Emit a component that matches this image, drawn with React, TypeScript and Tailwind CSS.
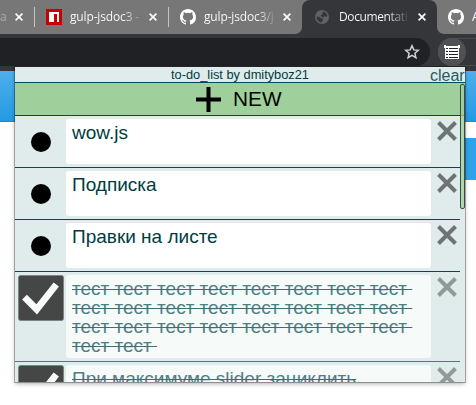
import React from 'react';

type Item = { text: string; done?: boolean; height: string };

const word = 'тест ';
const items: Item[] = [
  { text: 'wow.js', height: 'h-[52px]' },
  { text: 'Подписка', height: 'h-[52px]' },
  { text: 'Правки на листе', height: 'h-[52px]' },
  { text: [word.repeat(8), word.repeat(8), word.repeat(8), word.repeat(2)].join('\n'), done: true, height: 'h-[90px]' },
  { text: 'При максимуме slider зациклить', done: true, height: 'h-[90px]' },
];

function TabClose({ className = '' }: { className?: string }) {
  return (
    <svg className={`shrink-0 ${className}`} width="8" height="8" viewBox="0 0 8 8" stroke="#fff" strokeWidth="1.7">
      <path d="M.6.6l6.8 6.8M7.4.6L.6 7.4" />
    </svg>
  );
}

function GitHub() {
  return (
    <svg className="shrink-0" width="16" height="16" viewBox="0 0 16 16" fill="#fff">
      <path d="M8 0C3.58 0 0 3.58 0 8c0 3.54 2.29 6.53 5.47 7.59.4.07.55-.17.55-.38 0-.19-.01-.82-.01-1.49-2.01.37-2.53-.49-2.69-.94-.09-.23-.48-.94-.82-1.13-.28-.15-.68-.52-.01-.53.63-.01 1.08.58 1.23.82.72 1.21 1.87.87 2.33.66.07-.52.28-.87.51-1.07-1.78-.2-3.64-.89-3.64-3.95 0-.87.31-1.59.82-2.15-.08-.2-.36-1.02.08-2.12 0 0 .67-.21 2.2.82a7.6 7.6 0 0 1 4 0c1.53-1.04 2.2-.82 2.2-.82.44 1.1.16 1.92.08 2.12.51.56.82 1.27.82 2.15 0 3.07-1.87 3.75-3.65 3.95.29.25.54.73.54 1.48 0 1.07-.01 1.93-.01 2.2 0 .21.15.46.55.38A8.01 8.01 0 0 0 16 8c0-4.42-3.58-8-8-8z" />
    </svg>
  );
}

function Tabs() {
  const label = 'whitespace-pre bg-clip-text text-transparent leading-[20px]';
  return (
    <div className="flex h-[34px] bg-[#35363a] font-['Open_Sans','Noto_Sans',sans-serif] text-[12px] tracking-[-0.15px]">
      <div className="flex h-[34px] w-[302px] shrink-0 rounded-br-[7px] bg-[#777]">
        <div className="flex h-[34px] w-[34px] shrink-0 items-center">
          <span className="w-[15px] text-[#aaa]">a</span>
          <TabClose />
        </div>
        <div className="mt-[7px] h-5 w-px shrink-0 bg-[#c4c4c4]" />
        <div className="flex h-[34px] w-[133px] shrink-0 items-center pl-[11px]">
          <svg className="shrink-0" width="16" height="16" viewBox="0 0 16 16">
            <path fill="#c80000" d="M0 0h16v16H0z" />
            <path fill="#fff" d="M3 3h10v10h-2V5H8v8H3z" />
          </svg>
          <span className={`ml-2 w-[71px] bg-gradient-to-r from-white from-75% to-[#888] ${label}`}>gulp-jsdoc3 -</span>
          <TabClose className="ml-[8px]" />
        </div>
        <div className="mt-[7px] h-5 w-px shrink-0 bg-[#c4c4c4]" />
        <div className="flex h-[34px] w-[133px] shrink-0 items-center pl-[11px]">
          <GitHub />
          <span className={`ml-2 w-[71px] bg-gradient-to-r from-white from-75% to-[#888] ${label}`}>gulp-jsdoc3/j</span>
          <TabClose className="ml-[8px]" />
        </div>
      </div>
      <div className="h-[34px] w-[135px] shrink-0 bg-linear-to-b from-[#777] from-50% to-[#35363a] to-50%">
        <div className="flex h-[34px] items-center rounded-t-[8px] bg-[#35363a] pl-[13px]">
          <svg className="shrink-0" width="14" height="14" viewBox="0 0 14 14">
            <circle cx="7" cy="7" r="7" fill="#5f6368" />
            <path fill="#35363a" d="M8.2 1.6c2.2.4 3.8 2 4.2 4.2L11 7.2 9.6 6 8.4 7.4 6.2 6.6 5.6 5.2l1.6-1zM1.5 6.4l2.6.3 1.8 1.4 2.3.6-.4 1.7-1.5 2C3.6 12 1.5 9.600 1.500 6.400z" />
          </svg>
          <span className={`ml-[10px] w-[69px] bg-gradient-to-r from-white from-70% to-[#45464a] tracking-[-0.38px] ${label}`}>Documentati</span>
          <TabClose className="ml-[10px]" />
        </div>
      </div>
      <div className="flex h-[34px] w-[39px] shrink-0 items-center gap-2 rounded-bl-[7px] bg-[#777] pl-[11px]">
        <GitHub />
        <span className="w-1 text-white">A</span>
      </div>
    </div>
  );
}

function Toolbar() {
  return (
    <div className="flex h-[37px] bg-[#35363a] pt-1">
      <div className="flex h-7 w-[430px] items-center justify-end rounded-r-full bg-[#202124] pr-[10px]">
        <svg width="16" height="16" viewBox="0 0 16 16" fill="none" stroke="#d2d3d5" strokeWidth="1.5">
          <path d="M8 1.8l1.8 4.1 4.5.4-3.4 3 1 4.4L8 11.4l-3.900 2.300 1-4.400-3.400-3 4.500-.4z" />
        </svg>
      </div>
      <div className="ml-2 flex h-7 flex-1 items-center rounded-l-full border-y border-l border-[#4a4b4e]">
        <div className="-ml-px flex size-7 shrink-0 items-center justify-center rounded-full bg-[#505154]">
          <svg width="16" height="16" viewBox="0 0 16 16">
            <path fill="#fff" d="M0 1h2v1h12V1h2v3h-1v11H1V4H0z" />
            <path stroke="#222" strokeWidth="1" d="M5 4.500h9M5 7.500h9M5 10.500h9M5 13.500h9M2 4.500h2M2 7.500h2M2 10.500h2M2 13.500h2" />
          </svg>
        </div>
      </div>
    </div>
  );
}

function Row({ text, done, height }: Item) {
  return (
    <div className={`flex shrink-0 border-b pt-[3px] pb-[3px] ${height} ${done ? 'border-[#3f7f84]' : 'border-[#004b50]'}`}>
      <div className="w-[51px] shrink-0 pl-[3px]">
        {done ? (
          <svg width="46" height="46" viewBox="0 0 46 46">
            <rect x=".5" y=".5" width="45" height="45" rx="2" fill="#444746" stroke="#7d8582" />
            <path d="M6.500 22.200L18.700 34.400 38.300 9.500" fill="none" stroke="#f7fbfa" strokeWidth="6.800" />
          </svg>
        ) : (
          <div className="mt-[13px] ml-[13px] size-5 rounded-full bg-black" />
        )}
      </div>
      <div className={`w-[365px] shrink-0 whitespace-pre rounded-[3px] pt-[4px] pl-[6px] text-[19px] leading-[19px] ${done ? 'bg-[#f6faf9] text-[#4d8084] line-through decoration-[#3f6f75] decoration-1' : 'bg-white text-[#003c41]'}`}>
        {text}
      </div>
      <svg className="mt-[2px] ml-[6px]" width="20" height="20" viewBox="0 0 20 20" stroke={done ? '#929a98' : '#6e7473'} strokeWidth="4">
        <path d="M1.500 1.500l17 17M18.500 1.500l-17 17" />
      </svg>
    </div>
  );
}

export default function App() {
  return (
    <div className="relative h-[405px] w-[476px] overflow-hidden bg-white font-['Liberation_Sans',Arial,sans-serif]">
      <Tabs />
      <Toolbar />
      <div className="h-[51px] border-b border-[#168bd2] bg-gradient-to-b from-[#4daeea] to-[#1f9be4]" />
      <div className="mt-4 ml-auto h-[42px] w-3 bg-[#30a2e8]" />

      <div className="absolute top-[67px] left-[15px] flex h-[315px] w-[450px] flex-col bg-[#e0eceb] shadow-[0_0_0_1px_rgba(0,0,0,0.28),0_2px_4px_rgba(0,0,0,0.3)]">
        <div className="relative h-4 shrink-0 border-b border-[#004b50] text-center text-[12.8px] leading-[15px] text-[#003c41]">
          to-do_list by dmityboz21
          <span className="absolute top-0 right-0 h-[15px] w-[35px] text-left text-[16px] leading-[17px] text-[#285b5f]">clear</span>
        </div>
        <div className="flex h-[33px] shrink-0 items-center border-b border-[#004b50] bg-[#9fd09b] pl-[181px]">
          <svg width="25" height="25" viewBox="0 0 25 25" stroke="#000" strokeWidth="4">
            <path d="M0 12.5h25M12.5 0v25" />
          </svg>
          <span className="ml-3 text-[20.8px] leading-[32px] text-black">NEW</span>
        </div>
        <div className="flex w-[445px] min-h-0 flex-1 flex-col overflow-hidden">
          {items.map((item, i) => (
            <Row key={i} {...item} />
          ))}
        </div>
        <div className="absolute top-[17px] right-0 h-[125px] w-[5px] rounded-[2px] border border-[#394b3c] bg-[#9fd09b]/75" />
      </div>
    </div>
  );
}
